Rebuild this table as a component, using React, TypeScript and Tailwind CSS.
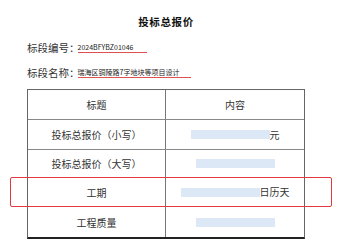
import React from 'react';

type Row = { label: string; suffix?: string; h: string };

const rows: Row[] = [
  { label: '投标总报价（小写）', suffix: '元', h: 'h-[30px]' },
  { label: '投标总报价（大写）', h: 'h-[28px]' },
  { label: '工期', suffix: '日历天', h: 'h-[29px]' },
  { label: '工程质量', h: 'h-[30px]' },
];

const Field: React.FC<{ label: string; value: string; line: string }> = ({ label, value, line }) => (
  <div className="flex items-center h-[25px]">
    <span className="text-[10.5px] text-[#333]">{label}</span>
    <span className={`-ml-[2px] text-[7px] leading-[9px] text-[#222] border-b border-[#e05050] ${line}`}>{value}</span>
  </div>
);

export default function App() {
  return (
    <div
      className="relative w-[363px] h-[241px] bg-white overflow-hidden"
      style={{ fontFamily: '"Noto Sans CJK SC", "Noto Sans", sans-serif' }}
    >
      <div className="ml-[27px] w-[278px] pt-[14px]">
        <h1 className="text-center text-[10.5px] font-bold tracking-[0.6px] text-[#111] leading-[16px]">投标总报价</h1>

        <div className="mt-[5px]">
          <Field label="标段编号：" value="2024BFYBZ01046" line="w-[69px]" />
          <Field label="标段名称：" value="瑞海区铜陵路7字地块等项目设计" line="w-[113px]" />
        </div>

        {/* bid summary table */}
        <div className="mt-[4px] border-t border-l border-r border-[#666] border-b-2 border-b-[#222] text-[10px] text-[#333]">
          <div className="grid grid-cols-[138px_1fr] h-[30px] border-b border-[#888]">
            <div className="flex items-center justify-center border-r border-[#777]">标题</div>
            <div className="flex items-center justify-center">内容</div>
          </div>
          {rows.map((r, i) => (
            <div
              key={r.label}
              className={`grid grid-cols-[138px_1fr] ${r.h} ${i < rows.length - 1 ? 'border-b border-[#888]' : ''}`}
            >
              <div className="flex items-center justify-center border-r border-[#777]">{r.label}</div>
              <div className="flex items-center justify-center">
                <span className="w-[79px] h-[9px] bg-[#dce8f5]" />
                {r.suffix && <span className="leading-none">{r.suffix}</span>}
              </div>
            </div>
          ))}
        </div>
      </div>

      {/* highlight around the duration row */}
      <div className="absolute left-[10px] top-[177px] w-[322px] h-[30px] border-[1.5px] border-[#e0393e] rounded-[2px]" />
    </div>
  );
}
